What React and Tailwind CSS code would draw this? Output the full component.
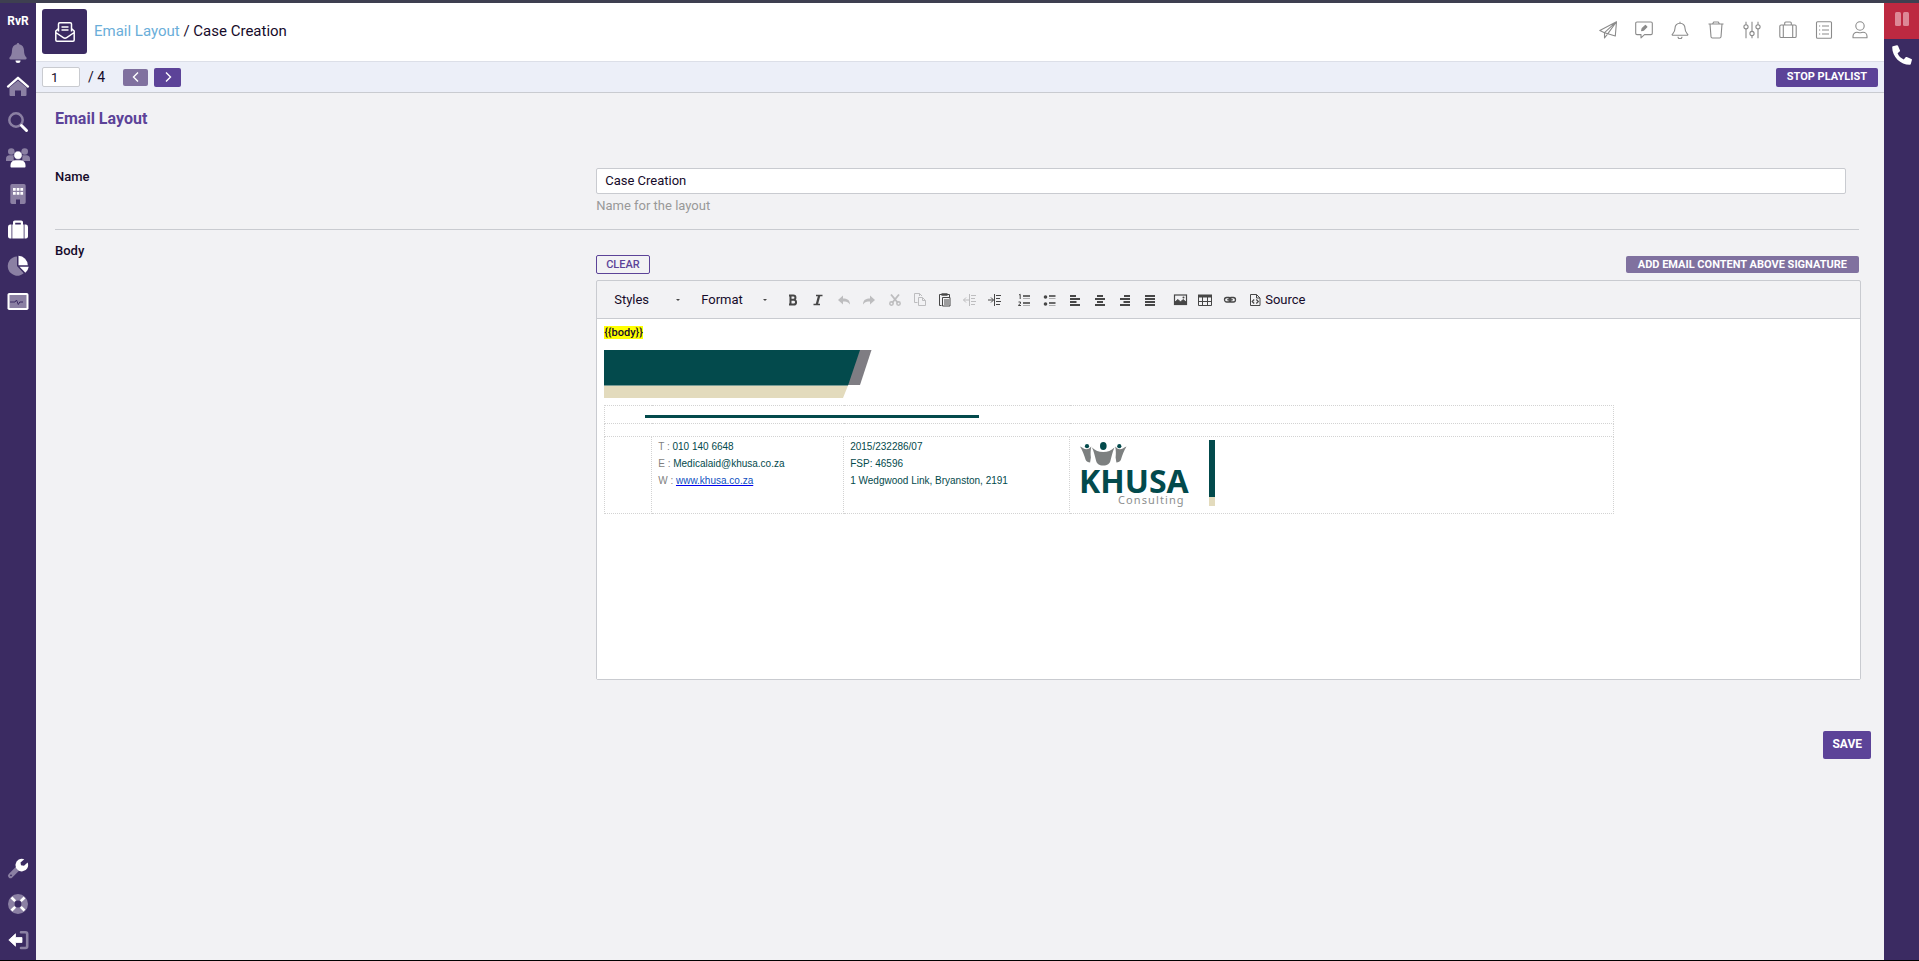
import React from "react";

const faded = "#8b80a3";

function SideIcon({ children }) {
  return (
    <svg viewBox="0 0 24 24" className="size-6" fill="#fff" aria-hidden="true">
      {children}
    </svg>
  );
}

function SideLink({ label, children, className = "h-9" }) {
  return (
    <a href="#" aria-label={label} className={`flex w-full items-center justify-center ${className}`}>
      <SideIcon>{children}</SideIcon>
    </a>
  );
}

function Sidebar() {
  return (
    <nav aria-label="Main" className="flex w-9 shrink-0 flex-col items-center bg-[#3b2b62] pb-0.5">
      <a href="#" className="flex h-[34px] items-center pt-0.5 text-[12px] font-bold text-white">RvR</a>
      <SideLink label="Notifications" className="h-[31px]">
        <path fill={faded} d="M12 2a1.2 1.2 0 0 1 1.2 1.3c3 .6 4.8 3 4.8 6 0 4 1 5.600 2.300 7 .8 1 .2 2.200-.9 2.200H4.600c-1.100 0-1.700-1.200-.9-2.200C5 14.900 6 13.300 6 9.300c0-3 1.800-5.400 4.800-6A1.200 1.200 0 0 1 12 2z" />
        <path d="M9.500 19.600h5a2.500 2.500 0 0 1-5 0z" />
      </SideLink>
      <SideLink label="Home">
        <path fill={faded} d="M12 6.500 20.500 13.500V21a1 1 0 0 1-1 1H15v-5.500h-6V22H4.500a1 1 0 0 1-1-1V13.500z" />
        <path d="M2 12.600 12 3.800l10 8.800" fill="none" stroke="#fff" strokeWidth="2.300" strokeLinecap="round" strokeLinejoin="round" />
      </SideLink>
      <SideLink label="Search">
        <circle cx="10" cy="10" r="6.700" fill="none" stroke={faded} strokeWidth="2.500" />
        <path d="m15.500 15.500 5 5" stroke="#fff" strokeWidth="3" strokeLinecap="round" />
      </SideLink>
      <SideLink label="Contacts">
        <g fill={faded}>
          <circle cx="5.300" cy="5.500" r="3.300" />
          <circle cx="18.700" cy="5.500" r="3.300" />
          <path d="M0 15v-2a3.700 3.700 0 0 1 3.700-3.700h4V15zM24 15v-2a3.700 3.700 0 0 0-3.700-3.700h-4V15z" />
        </g>
        <circle cx="12" cy="9.200" r="4.200" stroke="#3b2b62" strokeWidth=".6" />
        <path d="M4.500 20.700V19a5 5 0 0 1 5-4.800h5a5 5 0 0 1 5 4.800v1.700a.7.7 0 0 1-.7.700H5.200a.7.7 0 0 1-.7-.7z" />
      </SideLink>
      <SideLink label="Companies">
        <path fill={faded} d="M6 2h12a1.700 1.700 0 0 1 1.700 1.700v16.600A1.700 1.700 0 0 1 18 22h-4v-4.500h-4V22H6a1.700 1.700 0 0 1-1.700-1.700V3.700A1.700 1.700 0 0 1 6 2z" />
        <path d="M7 6h2.700v2.700H7zM10.700 6h2.700v2.700h-2.700zM14.400 6h2.700v2.700h-2.700zM7 10h2.700v2.700H7zM10.700 10h2.700v2.700h-2.700zM14.400 10h2.700v2.700h-2.700z" />
      </SideLink>
      <SideLink label="Cases">
        <path d="M2 9a2.500 2.500 0 0 1 2-2.500h1.500V20.500H4A2.200 2.200 0 0 1 2 18.500zM22 9a2.500 2.500 0 0 0-2-2.500h-1.500v14H20a2.200 2.200 0 0 0 2-2zM6.300 6.500H7V4.300C7 3.200 7.800 2.500 8.800 2.500h6.400c1 0 1.800.7 1.800 1.800v2.200h.7v14H6.300zM9.200 6.500h5.600V4.700H9.200z" fillRule="evenodd" />
      </SideLink>
      <SideLink label="Reports">
        <path fill={faded} d="M11 2.500V12l6.700 7.300A9.600 9.600 0 1 1 11 2.500z" />
        <path d="M12.500 1.800A9.500 9.500 0 0 1 21.800 11.300h-9.300z" />
        <path d="M13.500 12.800h9.200a9.500 9.500 0 0 1-3.300 6z" />
      </SideLink>
      <SideLink label="Monitoring">
        <rect x="1.500" y="3" width="21" height="17" rx="1.800" />
        <path fill={faded} d="M3.500 5h17v13h-17z" />
        <path d="M4 12h5l1.500-2 1.800 4.500 1.500-2.500H17" fill="none" stroke="#3b2b62" strokeWidth="1" />
      </SideLink>
      <div className="flex-1" />
      <SideLink label="Settings">
        <path d="m4.500 19.700 8.500-8.500" stroke={faded} strokeWidth="5" strokeLinecap="round" />
        <circle cx="5" cy="19.300" r=".9" fill="#3b2b62" />
        <path d="M18.300 3.300a6.300 6.300 0 1 0 3.300 3.300l-3.600 3.200-3-.6-.5-2.700z" />
      </SideLink>
      <SideLink label="Help">
        <circle cx="12" cy="12" r="6.700" fill="none" stroke={faded} strokeWidth="6.600" />
        <path d="m5.500 5.500 3.700 3.700m5.600 5.600 3.700 3.700m0-13-3.700 3.700m-5.600 5.600-3.700 3.700" stroke="#fff" strokeWidth="2.600" />
      </SideLink>
      <SideLink label="Log out">
        <path d="M15 4.300h4.500A1.700 1.700 0 0 1 21.200 6v12.300a1.700 1.700 0 0 1-1.700 1.700H15" fill="none" stroke={faded} strokeWidth="2.600" strokeLinecap="round" />
        <path d="m2.800 12 6.700-6.200v3.700H16V14.500H9.500v3.700z" stroke="#fff" strokeLinejoin="round" strokeWidth=".8" />
      </SideLink>
    </nav>
  );
}

const headerIcons = [
  ["Send", <><path d="M17.500.7.800 9.500l4.700 2.200L16.300 15zM5.500 11.700v5.200l3-3.800M17.500.7 5.500 11.700M17.500.7l-9 12.400" /></>],
  ["Feedback", <><path d="M2 1h14a1.300 1.300 0 0 1 1.300 1.300v10a1.300 1.300 0 0 1-1.300 1.300H9.500L6 16.800v-3.200H2A1.300 1.300 0 0 1 .7 12.300v-10A1.300 1.300 0 0 1 2 1z" /><path d="m6.600 9.700.6-2.200 3.200-3.100 1.500 1.500-3.200 3.200z" fill="#8b8b8b" /></>],
  ["Alerts", <><path d="M9 .8v1.500M9 2.300c-3 0-5 2-5 5 0 3.700-1.500 4.700-2.700 6-.3.500 0 1 .5 1h14.400c.5 0 .8-.5.5-1C15.500 12 14 11 14 7.300c0-3-2-5-5-5zM7 15.800a2 2 0 0 0 4 0" /></>],
  ["Delete", <><path d="M1.500 3h15M5.500 3l1.200-2h4.600l1.200 2M3 3l1 12.700a1.400 1.400 0 0 0 1.400 1.300h7.200a1.400 1.400 0 0 0 1.400-1.300L15 3" /></>],
  ["Filters", <><path d="M3 .7v3M3 8v9.300M9 .7v9.600M9 14.600v2.700M15 .7v3M15 8v9.300" /><circle cx="3" cy="5.800" r="2.100" /><circle cx="9" cy="12.500" r="2.100" /><circle cx="15" cy="5.800" r="2.100" /></>],
  ["Briefcase", <><rect x=".8" y="4" width="16.400" height="12.500" rx="1.300" /><path d="M4.300 4v12.500M13.700 4v12.500M5.700 4V2A1 1 0 0 1 6.700 1h4.600a1 1 0 0 1 1 1v2" /></>],
  ["List", <><rect x="1.500" y=".8" width="15" height="16.400" rx="1" /><path d="M4 5h1.200M7 5h7M4 9h1.200M7 9h7M4 13h1.200M7 13h7" /></>],
  ["Profile", <><circle cx="9" cy="5" r="4.200" /><path d="M2 16.700v-1.500a4 4 0 0 1 4-4c1 0 1.500.6 3 .6s2-.6 3-.6a4 4 0 0 1 4 4v1.500z" /></>],
];

function Header() {
  return (
    <header className="flex h-[59px] items-center border-b border-[#dcdfe8] bg-white pl-1.5 pr-1.5">
      <div className="flex flex-col justify-start self-start pt-1.5">
        <div className="flex size-[45px] items-center justify-center rounded-[3px] bg-[#3b2b62]">
          <svg viewBox="0 0 20 20" className="size-5" fill="none" stroke="#fff" strokeWidth="1.500" strokeLinejoin="round" aria-hidden="true">
            <path d="M3.500 9.500V2A1.200 1.200 0 0 1 4.700.8h10.600A1.200 1.200 0 0 1 16.500 2v7.500M6.500 5h7M6.500 8h7M3.500 6.500.8 9v9a1.200 1.200 0 0 0 1.200 1.200h16a1.200 1.200 0 0 0 1.200-1.200V9l-2.700-2.500M.8 10.500l7.500 5.200a3 3 0 0 0 3.400 0l7.500-5.200" />
          </svg>
        </div>
      </div>
      <h1 className="ml-[7px] pb-0.5 text-[15px]">
        <a href="#" className="text-[#6aaed9]">Email Layout</a> / Case Creation
      </h1>
      <div className="ml-auto flex pb-1">
        {headerIcons.map(([label, icon]) => (
          <button key={label} type="button" aria-label={label} className="flex size-9 items-center justify-center">
            <svg viewBox="0 0 18 18" className="size-[18px]" fill="none" stroke="#8b8b8b" strokeWidth="1.100" strokeLinejoin="round">{icon}</svg>
          </button>
        ))}
      </div>
    </header>
  );
}

function Pager() {
  return (
    <div className="flex h-[31px] items-center border-b border-[#c9cbd0] bg-[#eceff8] px-1.5">
      <input aria-label="Page" defaultValue="1" className="h-5 w-[38px] rounded-[2px] border border-[#c9cbd0] bg-white pl-2 text-[13px] outline-none" />
      <span className="ml-2 text-[14px]">/ 4</span>
      <button type="button" aria-label="Previous" className="ml-[18px] flex h-[17px] w-[25px] items-center justify-center rounded-[2px] bg-[#80719f]">
        <svg viewBox="0 0 10 10" className="size-2.5" fill="none" stroke="#fff" strokeWidth="1.400"><path d="M7 .5 2.500 5 7 9.500" /></svg>
      </button>
      <button type="button" aria-label="Next" className="ml-1.5 flex h-[19px] w-[27px] items-center justify-center rounded-[2px] bg-[#5c4398]">
        <svg viewBox="0 0 10 10" className="size-2.5" fill="none" stroke="#fff" strokeWidth="1.400"><path d="M3 .5 7.500 5 3 9.500" /></svg>
      </button>
      <button type="button" className="ml-auto h-[19px] rounded-[2px] bg-[#5c4398] px-[11px] text-[11px] font-bold text-white">STOP PLAYLIST</button>
    </div>
  );
}

function Tool({ label, disabled, children }) {
  return (
    <button type="button" aria-label={label} disabled={disabled} className="flex h-6 w-[25px] items-center justify-center text-[#474747] disabled:opacity-30">
      <svg viewBox="0 0 16 16" className="size-4" fill="none" stroke="currentColor">{children}</svg>
    </button>
  );
}

function Combo({ label }) {
  return (
    <span className="flex w-[87px] items-center">
      <select aria-label={label} className="w-[62px] appearance-none bg-transparent text-[13px] outline-none">
        <option>{label}</option>
      </select>
      <svg viewBox="0 0 4 2" className="pointer-events-none h-0.5 w-1" fill="#474747"><path d="M0 0h4L2 2z" /></svg>
    </span>
  );
}

function EditorToolbar() {
  return (
    <div role="toolbar" aria-label="Formatting" className="flex h-[38px] items-center border-b border-[#c9cbd0] pl-[17px]">
      <Combo label="Styles" />
      <Combo label="Format" />
      <div className="-ml-2 flex gap-px">
        <div className="flex">
          <Tool label="Bold">
            <path d="M4 3.500h4.300a2.100 2.100 0 0 1 0 4.300H5.500h3.200a2.300 2.300 0 0 1 0 4.700H4M5.500 3.500v9" strokeWidth="2" />
          </Tool>
          <Tool label="Italic">
            <path d="M6 3.500h6.500M3.500 12.500H10" strokeWidth="1.500" /><path d="M9.200 3.500 6.800 12.500" strokeWidth="2.300" />
          </Tool>
        </div>
        <div className="flex">
          <Tool label="Undo" disabled><path d="M2 8l5-4.500v3c4 0 7 1.500 7 6-1.500-2.500-4-3-7-3v3z" fill="currentColor" stroke="none" /></Tool>
          <Tool label="Redo" disabled><path d="M14 8 9 3.500v3c-4 0-7 1.500-7 6 1.500-2.500 4-3 7-3v3z" fill="currentColor" stroke="none" /></Tool>
        </div>
        <div className="flex">
          <Tool label="Cut" disabled>
            <path d="m4 2.500 7 8.500M12 2.500 5 11" strokeWidth="1.900" /><circle cx="4.500" cy="11.500" r="1.700" strokeWidth="1.500" /><circle cx="11.500" cy="11.500" r="1.700" strokeWidth="1.500" />
          </Tool>
          <Tool label="Copy" disabled><path d="M5.500 10.500h-3v-9h5l2.500 2.500M7.500 1.500V4M6.500 5.500h4l3 3v5h-7zM10.500 5.500v3h3" /></Tool>
          <Tool label="Paste"><path d="M4.500 13.500h-2v-11h10V5M5.500 5.500h7.500v8.500H5.500zM7 8h5M7 10h5M7 12h5" /><path d="M4.500 2.500h6" strokeWidth="2.500" /></Tool>
          <Tool label="Decrease indent" disabled><path d="M7.500 2v12M9 3.500h5M9 6.500h4M9 9.500h5M9 12.500h4M1.500 8H7M4 5.500 1.500 8 4 10.500" /></Tool>
          <Tool label="Increase indent"><path d="M7.500 2v12M9 3.500h5M9 6.500h4M9 9.500h5M9 12.500h4M1 8h5.500M4 5.500 6.500 8 4 10.500" /></Tool>
        </div>
      </div>
      <div className="ml-[5px] flex">
        <Tool label="Numbered list">
          <path d="M2 3l1.200-.7V7M1.500 10h2v1.500l-2 1.500V13.500H4" /><path d="M6 4h7M6 11h7" strokeWidth="2" opacity=".8" /><path d="M6 6.500h7M6 13.500h7" opacity=".4" />
        </Tool>
        <Tool label="Bulleted list">
          <circle cx="3.500" cy="5" r="1.800" fill="currentColor" stroke="none" /><circle cx="3.500" cy="12" r="1.800" fill="currentColor" stroke="none" /><path d="M7 4h6.500M7 11h6.500" strokeWidth="2" opacity=".8" /><path d="M7 6.500h6.500M7 13.500h6.500" opacity=".4" />
        </Tool>
        <Tool label="Align left"><path d="M3 4h6M3 7h10M3 10h6.500M3 13h10" strokeWidth="1.800" /></Tool>
        <Tool label="Align center"><path d="M5 4h6M3 7h10M5 10h6M3 13h10" strokeWidth="1.800" /></Tool>
        <Tool label="Align right"><path d="M7 4h6M3 7h10M6.500 10H13M3 13h10" strokeWidth="1.800" /></Tool>
        <Tool label="Justify"><path d="M3 4h10M3 7h10M3 10h10M3 13h10" strokeWidth="1.800" /></Tool>
      </div>
      <div className="ml-[5px] flex">
        <Tool label="Image">
          <rect x="2.500" y="3" width="12" height="9.500" strokeWidth="1.200" /><path d="m3 12v-2l3-2.500 2.500 2.500L11 7.500l3 2.500v2z" fill="currentColor" /><circle cx="11.500" cy="5.500" r="1" fill="currentColor" stroke="none" />
        </Tool>
        <Tool label="Table"><path d="M1.500 3v10.500h13V3M1.500 9.500h13M5.500 5v8.500M10.500 5v8.500" /><path d="M1 4h14" strokeWidth="3" /></Tool>
        <Tool label="Link"><rect x="2.500" y="5.500" width="6.500" height="4.500" rx="2.200" strokeWidth="1.300" /><rect x="7" y="5.500" width="6.500" height="4.500" rx="2.200" strokeWidth="1.300" /><path d="M5 7.800h6" /></Tool>
      </div>
      <button type="button" className="ml-[5px] flex items-center gap-0.5 text-[13px]">
        <svg viewBox="0 0 16 16" className="size-4" fill="none" stroke="#474747" aria-hidden="true">
          <path d="M3.500 2.500h6l3.500 3.500v7.500H3.500zM9.500 2.500V6h3.500" /><path d="m7.200 7.500-2 2 2 2M9.300 7.500l2 2-2 2" strokeWidth="1.200" />
        </svg>
        Source
      </button>
    </div>
  );
}

function KhusaLogo() {
  return (
    <svg viewBox="0 0 146 76" width="146" height="76" className="block" role="img" aria-label="Khusa Consulting">
      <g fill="#7d8080">
        <path d="M10 9.500c2.500 1 4 2.700 6.500 2.700 2.100 0 3.300-1.200 4.800-2.700-.8 4-.8 7.500-.4 11l-.8 5c-2 0-3.700-.7-4.500-2.700-1.500-5-2.900-9-5.600-13.300z" />
        <path d="M56.500 9.500c-2.500 1-4 2.700-6.500 2.700-2.100 0-3.300-1.200-4.800-2.700.8 4 .8 7.500.4 11l.8 5c2 0 3.700-.7 4.500-2.700 1.500-5 2.900-9 5.600-13.300z" />
        <path d="M22 10.500c3.500 3 6.500 4.500 11.200 4.500s7.800-1.500 11.300-4.500c-2 4.500-3 9-4 13-.8 3.500-3 5-7.300 5s-6.300-1.500-7.200-5c-1-4-2-8.500-4-13z" />
      </g>
      <g fill="#034a4c">
        <ellipse cx="33.300" cy="9" rx="3.300" ry="4" />
        <circle cx="17" cy="9.200" r="2.100" />
        <circle cx="49.300" cy="9.200" r="2.100" />
      </g>
      <text x="9" y="56" fill="#034a4c" className="font-['Noto_Sans',sans-serif] text-[32px] font-bold">KHUSA</text>
      <text x="48" y="67" fill="#8d8f8f" className="font-['Noto_Sans',sans-serif] text-[11px] tracking-widest">Consulting</text>
      <rect x="139" y="3" width="6" height="57" fill="#034a4c" />
      <rect x="139" y="60" width="6" height="9" fill="#e3dbbd" />
    </svg>
  );
}

function Signature() {
  const cell = "border border-dotted border-[#d3d3d3]";
  return (
    <table className="mt-[7px] w-[1010px] max-w-full table-fixed border-collapse font-['Liberation_Sans',Arial,sans-serif] text-[10px] leading-[17px] text-[#034a4c]">
      <colgroup>
        <col className="w-[47px]" />
        <col className="w-48" />
        <col className="w-[226px]" />
        <col />
      </colgroup>
      <tbody>
        <tr className="h-[18px]">
          <td colSpan={4} className={`${cell} pl-10`}>
            <div className="mt-1 h-[3px] w-[334px] bg-[#034a4c]" />
          </td>
        </tr>
        <tr className="h-[13px]">
          <td colSpan={4} className={cell} />
        </tr>
        <tr className="h-[77px] align-top">
          <td className={cell} />
          <td className={`${cell} px-1.5 pt-px`}>
            <p><span className="text-[#7f7f7f]">T : </span>010 140 6648</p>
            <p><span className="text-[#7f7f7f]">E : </span>Medicalaid@khusa.co.za</p>
            <p><span className="text-[#7f7f7f]">W : </span><a href="#" className="text-[#0f4fc0] underline decoration-[#0000ee]">www.khusa.co.za</a></p>
          </td>
          <td className={`${cell} px-1.5 pt-px`}>
            <p>2015/232286/07</p>
            <p>FSP: 46596</p>
            <p>1 Wedgwood Link, Bryanston, 2191</p>
          </td>
          <td className={cell}><KhusaLogo /></td>
        </tr>
      </tbody>
    </table>
  );
}

function Editor() {
  return (
    <div className="-mr-0.5 mt-1.5 rounded-[2px] border border-[#c9cbd0]">
      <EditorToolbar />
      <div role="textbox" aria-label="Body" aria-multiline="true" contentEditable suppressContentEditableWarning className="min-h-[360px] bg-white px-[7px] pt-[7px] outline-none">
        <p className="text-[11px] font-medium leading-[13px]"><span className="bg-[#ffff00]">{"{{body}}"}</span></p>
        <svg viewBox="0 0 268 48" width="268" height="48" className="mt-[11px] block" aria-hidden="true">
          <path d="M0 35.500h244L239 48H0z" fill="#e3dbbd" />
          <path d="M250 0h17.500L256 35H240z" fill="#7f7d83" />
          <path d="M0 0h256l-12 35.500H0z" fill="#034a4c" />
        </svg>
        <Signature />
      </div>
    </div>
  );
}

export default function App() {
  return (
    <div className="flex min-h-screen border-b border-t-[3px] border-b-black border-t-[#3e3f50] bg-[#f2f2f4] font-[Roboto,sans-serif] text-[#160b2a]">
      <Sidebar />
      <div className="flex min-w-0 flex-1 flex-col">
        <Header />
        <Pager />
        <main className="pl-[19px] pr-[25px] pt-3.5">
          <h2 className="text-[16px] font-bold leading-6 text-[#5c4398]">Email Layout</h2>
          <div className="mt-[37px] flex border-b border-[#c9cbd0] pb-3.5 text-[13px]">
            <label htmlFor="layout-name" className="w-[30%] shrink-0 font-medium leading-[18px]">Name</label>
            <div className="min-w-0 flex-1 pr-[13px]">
              <input id="layout-name" defaultValue="Case Creation" className="block h-[26px] w-full rounded-[2px] border border-[#c9cbd0] bg-white px-2 pb-0.5 outline-none" />
              <p className="mt-[3px] leading-[18px] text-[#999]">Name for the layout</p>
            </div>
          </div>
          <div className="flex text-[13px]">
            <span className="w-[30%] shrink-0 pt-[11px] font-medium leading-5">Body</span>
            <div className="min-w-0 flex-1 pt-[25px]">
              <div className="flex items-center justify-between">
                <button type="button" className="h-[19px] rounded-[2px] border border-[#5c4398] px-[9px] text-[11px] font-medium leading-none text-[#5c4398]">CLEAR</button>
                <button type="button" className="h-[17px] rounded-[2px] bg-[#80719f] px-3 text-[11px] font-bold leading-none text-white">ADD EMAIL CONTENT ABOVE SIGNATURE</button>
              </div>
              <Editor />
            </div>
          </div>
        </main>
        <div className="mt-[51px] flex justify-end pr-[13px]">
          <button type="button" className="h-7 rounded-[2px] bg-[#5c4398] px-[9px] pb-[3px] text-[12px] font-bold text-white">SAVE</button>
        </div>
      </div>
      <aside className="flex w-[35px] shrink-0 flex-col items-center bg-[#3b2b62]">
        <button type="button" aria-label="Pause" className="flex h-9 w-full items-center justify-center bg-[#bd2941] pb-1">
          <svg viewBox="0 0 14 16" className="h-4 w-3.5" fill="#dd8896"><rect x="0" y="1" width="6" height="14" rx="1.500" /><rect x="8" y="1" width="6" height="14" rx="1.500" /></svg>
        </button>
        <button type="button" aria-label="Call" className="flex h-8 w-full items-center justify-center">
          <svg viewBox="0 0 20 20" className="size-5" fill="#fff"><path d="M.9 1.300 4.800.2a1 1 0 0 1 1.200.6l1.900 4.500a1 1 0 0 1-.3 1.200L5.600 8.300c1 2.700 3.300 5 6.200 6.200l1.800-2.200a1 1 0 0 1 1.200-.3l4.500 1.900a1 1 0 0 1 .6 1.200l-1.100 3.900a1 1 0 0 1-1 .8C8.500 19.800.2 12 .2 2.300a1 1 0 0 1 .7-1z" /></svg>
        </button>
      </aside>
    </div>
  );
}
